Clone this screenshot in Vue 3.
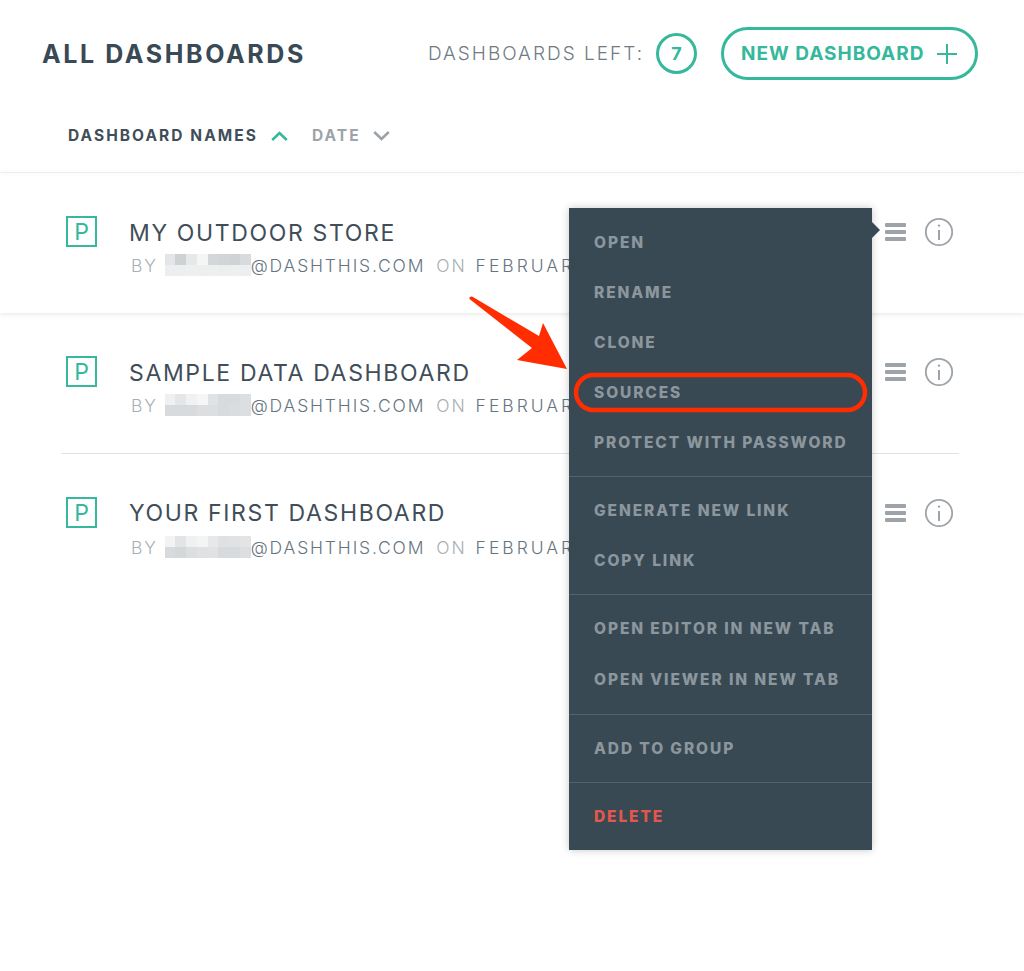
<script setup>
const rows = [
  { name: 'MY OUTDOOR STORE', cells: ['#e3e5e7','#ced2d5','#e6e8e9','#f4f5f5','#d4d7da','#d2d5d8','#d0d3d6','#d8dbdd','#eceeef','#eceeef','#eef0f0','#eceeef','#eef0f0','#eceeef','#eef0f0','#eceeef'] },
  { name: 'SAMPLE DATA DASHBOARD', cells: ['#eff0f1','#e4e6e8','#f0f1f2','#f6f6f7','#e0e2e4','#d8dbdd','#d8dbdd','#dcdfe1','#d8dbdd','#d8dbdd','#d8dbdd','#dcdee0','#dcdee0','#d8dbdd','#dadcde','#dcdee0'] },
  { name: 'YOUR FIRST DASHBOARD', cells: ['#f2f3f3','#e2e4e6','#eff0f1','#f3f4f4','#e6e8e9','#dfe1e3','#e0e2e4','#e2e4e6','#d8dbdd','#d5d8da','#dcdee0','#dfe1e3','#e0e2e4','#d8dbdd','#d8dbdd','#dcdee0'] }
]
const groups = [
  { items: ['OPEN', 'RENAME', 'CLONE', 'SOURCES', 'PROTECT WITH PASSWORD'] },
  { items: ['GENERATE NEW LINK', 'COPY LINK'] },
  { items: ['OPEN EDITOR IN NEW TAB', 'OPEN VIEWER IN NEW TAB'], tall: true },
  { items: ['ADD TO GROUP'] },
  { items: ['DELETE'], danger: true }
]
</script>

<template>
  <div class="page">
    <header class="head">
      <div class="top">
        <h1 class="title">ALL DASHBOARDS</h1>
        <div class="left">DASHBOARDS LEFT:</div>
        <div class="count">7</div>
        <button class="new">
          <span>NEW DASHBOARD</span>
          <svg width="22" height="22" viewBox="0 0 22 22" fill="none" stroke="#35b89c" stroke-width="2"><path d="M11 1v20M1 11h20"/></svg>
        </button>
      </div>
      <div class="sort">
        <span class="sort-on">DASHBOARD NAMES</span>
        <svg class="chev-up" width="17" height="10" viewBox="0 0 17 10" fill="none" stroke="#35b89c" stroke-width="2.6"><path d="M1.2 9l7.3-7 7.3 7"/></svg>
        <span class="sort-off">DATE</span>
        <svg width="17" height="10" viewBox="0 0 17 10" fill="none" stroke="#9da3a8" stroke-width="2.6"><path d="M1.2 1l7.3 7 7.3-7"/></svg>
      </div>
    </header>

    <section class="list">
      <article v-for="(row, i) in rows" :key="row.name" class="row" :class="'row-' + i">
        <div class="badge">P</div>
        <div class="info">
          <div class="name">{{ row.name }}</div>
          <div class="meta">
            <span class="dim">BY</span>
            <span class="blur">
              <i v-for="(c, k) in row.cells" :key="k" :style="{ background: c }"></i>
            </span>
            <span class="mail">@DASHTHIS.COM</span>
            <span class="dim on">ON</span>
            <span class="mail date">FEBRUARY</span>
          </div>
        </div>
        <div class="actions">
          <span class="burger"><i></i><i></i><i></i></span>
          <svg width="30" height="30" viewBox="0 0 30 30" fill="none" stroke="#9da3a8"><circle cx="15" cy="15" r="13.2" stroke-width="1.8"/><path d="M15 13v10" stroke-width="2"/><circle cx="15" cy="8.6" r="1.2" fill="#9da3a8" stroke="none"/></svg>
        </div>
      </article>
    </section>

    <nav class="menu">
      <div v-for="(g, i) in groups" :key="i" class="group" :class="{ tall: g.tall, danger: g.danger }">
        <div v-for="it in g.items" :key="it" class="item">{{ it }}</div>
      </div>
    </nav>

    <svg class="mark" width="420" height="140" viewBox="0 0 420 140" fill="none">
      <path d="M0.500 4C0 2 2 1 3.500 1.800L70 41 74 28 98 74 48 65 63 53 0.500 4Z" fill="#ff2d00"/>
      <rect x="107" y="80" width="289" height="35" rx="17.500" stroke="#ff2d00" stroke-width="4.500"/>
    </svg>
  </div>
</template>

<style>
html, body { margin: 0; background: #fff; }
</style>

<style scoped>
.page {
  position: relative;
  width: 1024px;
  height: 971px;
  overflow: hidden;
  background: #fff;
  font-family: Inter, "Liberation Sans", sans-serif;
  color: #3a4a55;
}
.head {
  height: 173px;
  box-sizing: border-box;
  padding: 27px 46px 0 42px;
  border-bottom: 1px solid #f4f5f6;
  box-shadow: 0 2px 4px rgba(0, 0, 0, .02);
}
.top { display: flex; align-items: center; height: 53px; }
.title {
  margin: 0 auto 0 0;
  font-size: 25px;
  font-weight: 700;
  letter-spacing: 2.600px;
  color: #394955;
}
.left { font-size: 19px; font-weight: 300; letter-spacing: 2px; color: #6f7b85; margin-right: 12px; white-space: nowrap; }
.count {
  width: 41px; height: 41px;
  box-sizing: border-box;
  border: 3px solid #35b89c;
  border-radius: 50%;
  display: flex; align-items: center; justify-content: center;
  font-size: 18px; font-weight: 700; color: #35b89c;
  margin-right: 24px;
}
.new {
  width: 257px; height: 53px;
  box-sizing: border-box;
  border: 3px solid #35b89c;
  border-radius: 27px;
  background: #fff;
  padding: 0 17px 0 17px;
  display: flex; align-items: center; justify-content: space-between;
  font-family: inherit;
  font-size: 19px; font-weight: 700; letter-spacing: 1px; color: #35b89c;
}
.sort { display: flex; align-items: center; margin: 46px 0 0 26px; font-size: 15.500px; font-weight: 700; letter-spacing: 2.050px; }
.sort-on { color: #3f4e59; margin-right: 13px; white-space: nowrap; }
.sort-off { color: #9da3a8; margin: 0 12px 0 24px; }
.list { position: relative; }
.row { display: flex; height: 140px; box-sizing: border-box; padding: 0 70px 0 66px; }
.row-0 { box-shadow: 0 1px 5px rgba(0, 0, 0, .1); }
.row-1 { height: 141px; position: relative; }
.row-1::after { content: ""; position: absolute; left: 61px; right: 65px; bottom: 0; height: 1px; background: #dfe3e6; }
.badge {
  width: 31px; height: 31px;
  box-sizing: border-box;
  margin-top: 43px;
  border: 2px solid #35b89c;
  display: flex; align-items: center; justify-content: center;
  font-size: 23px; font-weight: 400; color: #35b89c;
}
.info { margin: 44px 0 0 32px; flex: 1; }
.name { font-size: 23px; line-height: 32px; font-weight: 400; letter-spacing: 1.650px; color: #3f4e59; white-space: nowrap; }
.meta { display: flex; align-items: center; margin-top: 4px; height: 24px; font-size: 17.500px; font-weight: 300; letter-spacing: 1.850px; white-space: nowrap; }
.row-2 .name { margin-top: -1px; }
.row-2 .meta { margin-top: 6px; }
.dim { color: #a9afb4; margin-left: 2px; }
.mail { color: #66747f; }
.date { letter-spacing: 3px; }
.on { margin: 0 9px 0 11px; }
.blur { display: grid; grid-template-columns: repeat(8, 10.750px); grid-auto-rows: 11px; width: 86px; margin-left: 7px; }
.actions { display: flex; align-items: center; gap: 18px; height: 30px; margin-top: 44px; }
.burger { width: 21px; display: flex; flex-direction: column; gap: 3px; }
.burger i { height: 4px; background: #9da3a8; border-radius: 1px; }
.menu {
  position: absolute;
  left: 569px; top: 208px;
  width: 303px;
  background: #394954;
  box-shadow: 0 0 8px rgba(0, 0, 0, .22);
}
.menu::after {
  content: "";
  position: absolute;
  right: -8px; top: 14px;
  border-left: 8px solid #394954;
  border-top: 8px solid transparent;
  border-bottom: 8px solid transparent;
}
.group { padding: 9px 0; border-top: 1px solid #53626c; }
.group:first-child { border-top: 0; }
.group:not(:first-child) { padding-top: 8px; }
.item {
  height: 50px;
  line-height: 51px;
  padding-left: 25px;
  font-size: 15.500px;
  font-weight: 800;
  letter-spacing: 1.900px;
  color: #8c969d;
  white-space: nowrap;
}
.tall .item { height: 51px; line-height: 52px; }
.danger .item { color: #e4574a; }
.mark { position: absolute; left: 469px; top: 295px; }
</style>
